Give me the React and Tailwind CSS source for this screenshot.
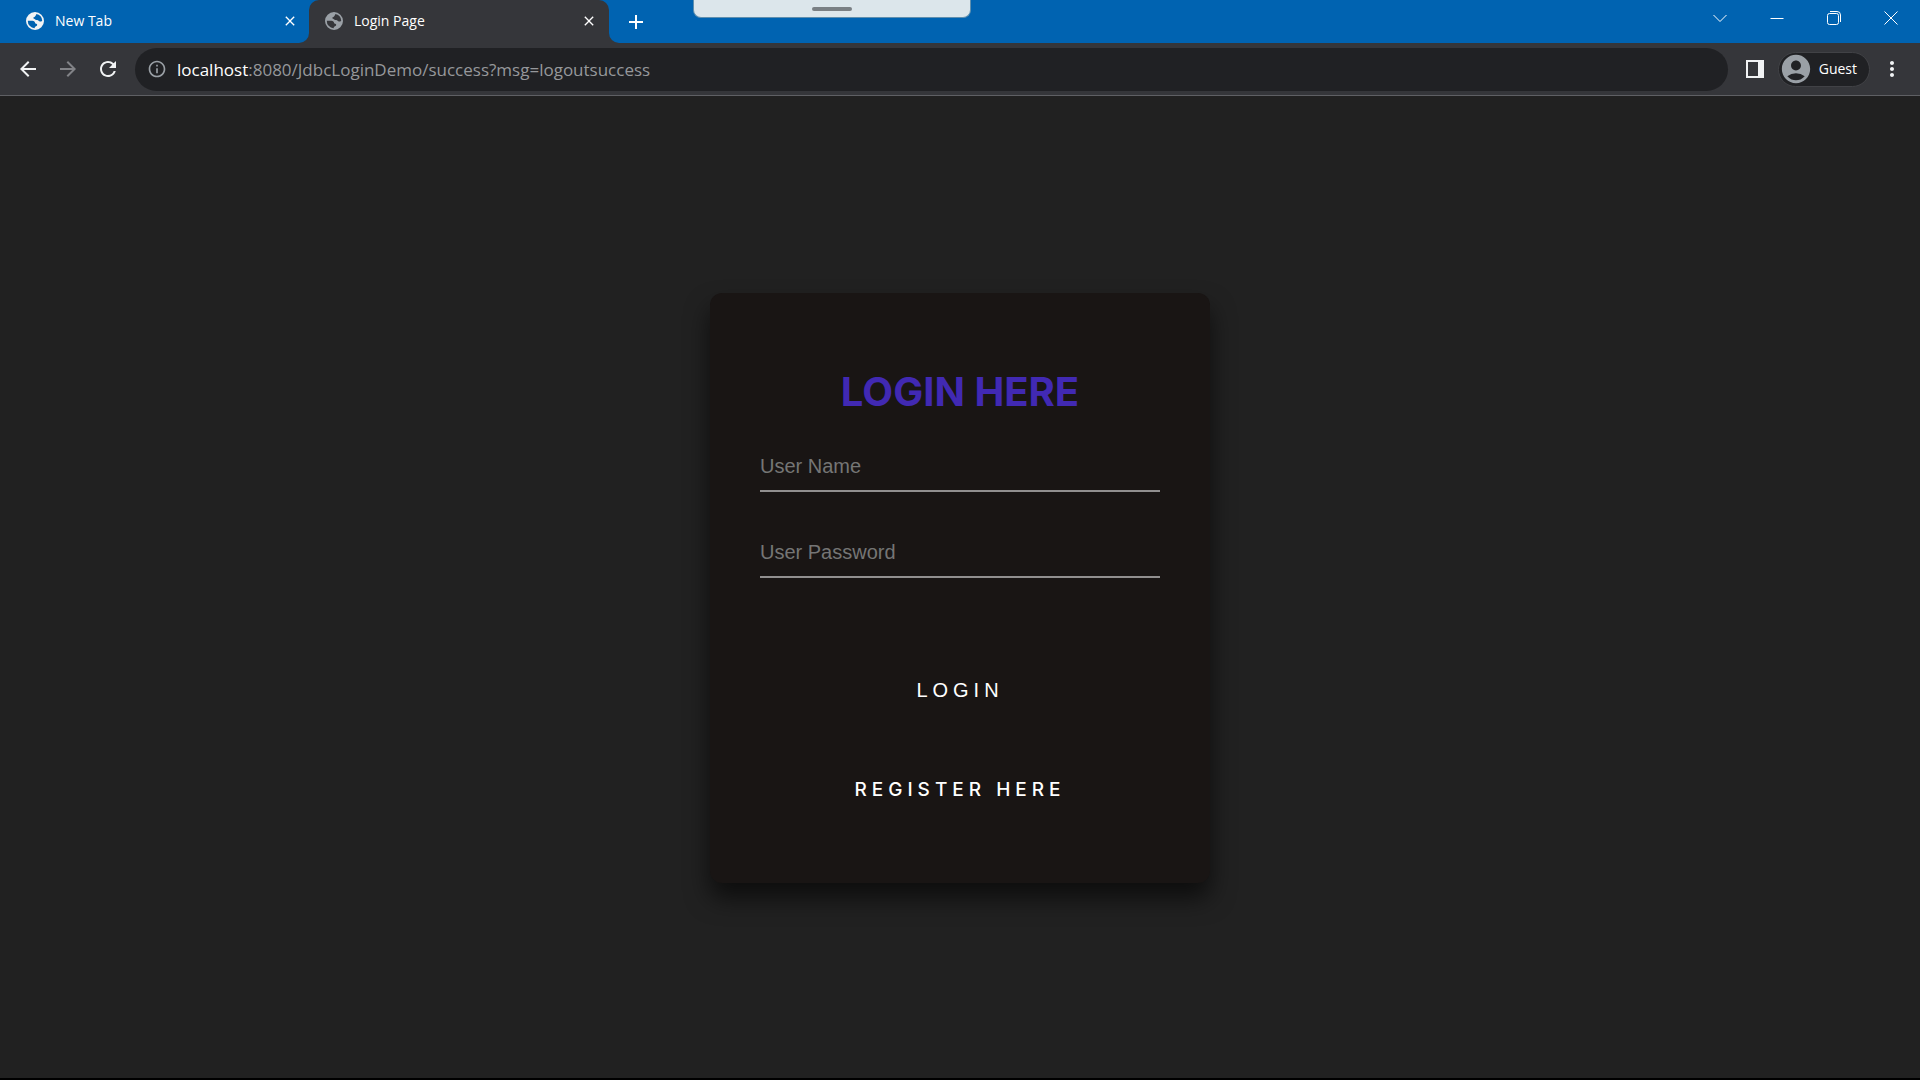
import React from "react";
import { MdArrowBack, MdArrowForward, MdRefresh, MdInfoOutline, MdAccountCircle, MdMoreVert, MdClose, MdAdd } from "react-icons/md";

function Globe({ className }) {
  return (
    <svg viewBox="0 0 18 18" className={className} aria-hidden="true">
      <path
        fill="currentColor"
        fillRule="evenodd"
        d="M9 0a9 9 0 1 0 0 18A9 9 0 0 0 9 0ZM10.200 1.900A7.200 7.200 0 0 1 16.200 8.700C15 10 13 9.800 12.600 8.800C12.200 7.800 10 8.300 9.200 7.500C8.300 6.600 7.600 6.700 7.300 5.900C7 5 8.900 5.200 9.200 4.200C9.500 3.300 10.500 3.200 10.200 1.900ZM1.800 8.700H6.400C8 8.700 9.100 9.600 9.100 11.100C9.100 12.200 11.200 11.500 11.200 12.700C11.200 14.300 8.900 13.800 8.600 16.200A7.200 7.200 0 0 1 1.800 8.700Z"
      />
    </svg>
  );
}

function WindowButton({ label, children }) {
  return (
    <button type="button" aria-label={label} className="flex h-9 w-[57px] items-center justify-center text-white">
      <svg viewBox="0 0 14 14" className="size-3.5" fill="none" stroke="currentColor" strokeWidth="1" aria-hidden="true">
        {children}
      </svg>
    </button>
  );
}

function TabStrip() {
  return (
    <header className="relative flex h-[43px] bg-[#0063b1] text-sm text-white">
      <div className="flex w-[309px] items-center pr-[11px] pb-0.5 pl-[26px]">
        <Globe className="size-[18px] text-[#f1f3f4]" />
        <button type="button" className="ml-[11px] flex-1 text-left">New Tab</button>
        <button type="button" aria-label="Close New Tab"><MdClose className="size-4" /></button>
      </div>
      <div className="relative flex w-[300px] items-center rounded-t-[10px] bg-[#35363a] pr-3 pb-0.5 pl-4">
        <span className="absolute bottom-0 -left-2.5 size-2.5 bg-[#35363a]"><span className="block size-full rounded-br-[10px] bg-[#0063b1]" /></span>
        <span className="absolute -right-2.5 bottom-0 size-2.5 bg-[#35363a]"><span className="block size-full rounded-bl-[10px] bg-[#0063b1]" /></span>
        <Globe className="size-[18px] text-[#9aa0a6]" />
        <button type="button" className="ml-[11px] flex-1 text-left">Login Page</button>
        <button type="button" aria-label="Close Login Page"><MdClose className="size-4" /></button>
      </div>
      <button type="button" aria-label="New tab" className="ml-[15px]"><MdAdd className="size-6" /></button>
      <div className="absolute top-0 left-[693px] flex h-[18px] w-[278px] justify-center rounded-b-lg border border-t-0 border-[#5f8fae] bg-[#dce6eb] pt-[7px]">
        <span className="h-1 w-10 rounded-full bg-[#7a8084]" />
      </div>
      <div className="ml-auto flex pr-px">
        <WindowButton label="Search tabs"><path d="M.5 4 7 10.500 13.500 4" /></WindowButton>
        <WindowButton label="Minimize"><path d="M.5 7.500h13" /></WindowButton>
        <WindowButton label="Restore">
          <rect x=".5" y="2.500" width="11" height="11" rx="2" />
          <path d="M3 .5h7a3.500 3.500 0 0 1 3.500 3.500v7" />
        </WindowButton>
        <WindowButton label="Close"><path d="m.5.5 13 13M13.500.5l-13 13" /></WindowButton>
      </div>
    </header>
  );
}

function Toolbar() {
  return (
    <nav className="flex h-[53px] items-center border-b border-[#5f6064] bg-[#35363a] px-4 text-[#f1f3f4]">
      <div className="flex gap-4">
        <button type="button" aria-label="Back"><MdArrowBack className="size-6" /></button>
        <button type="button" aria-label="Forward" className="text-[#828387]"><MdArrowForward className="size-6" /></button>
        <button type="button" aria-label="Reload"><MdRefresh className="size-6" /></button>
      </div>
      <div className="ml-[15px] flex h-[43px] flex-1 items-center rounded-full bg-[#202124] pl-3">
        <MdInfoOutline className="size-5 text-[#9aa0a6]" />
        <p className="ml-2.5 pt-0.5 text-[17px] text-[#96989b]"><span className="text-white">localhost</span>:8080/JdbcLoginDemo/success?msg=logoutsuccess</p>
      </div>
      <button type="button" aria-label="Side panel" className="ml-[18px]">
        <svg viewBox="0 0 18 18" className="size-[18px]" aria-hidden="true">
          <path fill="currentColor" fillRule="evenodd" d="M0 0h18v18H0ZM2 2v14h10V2Z" />
        </svg>
      </button>
      <button type="button" className="ml-3.5 flex h-[35px] items-center rounded-full border border-[#414246] bg-[#202124] pr-3 text-sm text-white">
        <MdAccountCircle className="size-[34px] text-[#9aa0a6]" />
        <span className="ml-1.5">Guest</span>
      </button>
      <button type="button" aria-label="Menu" className="ml-2.5"><MdMoreVert className="size-6" /></button>
    </nav>
  );
}

function Field({ label, name, type }) {
  return (
    <input
      name={name}
      type={type}
      aria-label={label}
      placeholder={label}
      className="h-[50px] w-full border-b-2 border-[#918f8f] bg-transparent font-['Liberation_Sans',Arial,sans-serif] text-xl text-white outline-none placeholder:text-[#757575]"
    />
  );
}

export default function App() {
  return (
    <div className="flex min-h-screen flex-col bg-[#212121] font-['Open_Sans','Segoe_UI',sans-serif]">
      <TabStrip />
      <Toolbar />
      <main className="flex flex-1 items-center justify-center border-b-2 border-black pt-0.5 font-['Inter',sans-serif]">
        <form className="w-[500px] rounded-xl bg-[#191514] px-[50px] pt-[70px] pb-[65px] shadow-[0_15px_25px_rgba(0,0,0,0.6)]">
          <h1 className="mb-[21px] text-center text-[40px] leading-[58px] font-bold text-[#4129b3]">LOGIN HERE</h1>
          <div className="flex flex-col gap-9">
            <Field label="User Name" name="username" type="text" />
            <Field label="User Password" name="password" type="password" />
          </div>
          <div className="mt-[84px] flex flex-col items-center gap-11 text-white">
            <button type="submit" className="px-5 py-3.5 font-['Liberation_Sans',Arial,sans-serif] text-xl leading-7 tracking-[5px]">LOGIN</button>
            <a href="#register" className="px-5 py-3.5 text-[19px] leading-7 font-medium tracking-[5px]">REGISTER HERE</a>
          </div>
        </form>
      </main>
    </div>
  );
}
